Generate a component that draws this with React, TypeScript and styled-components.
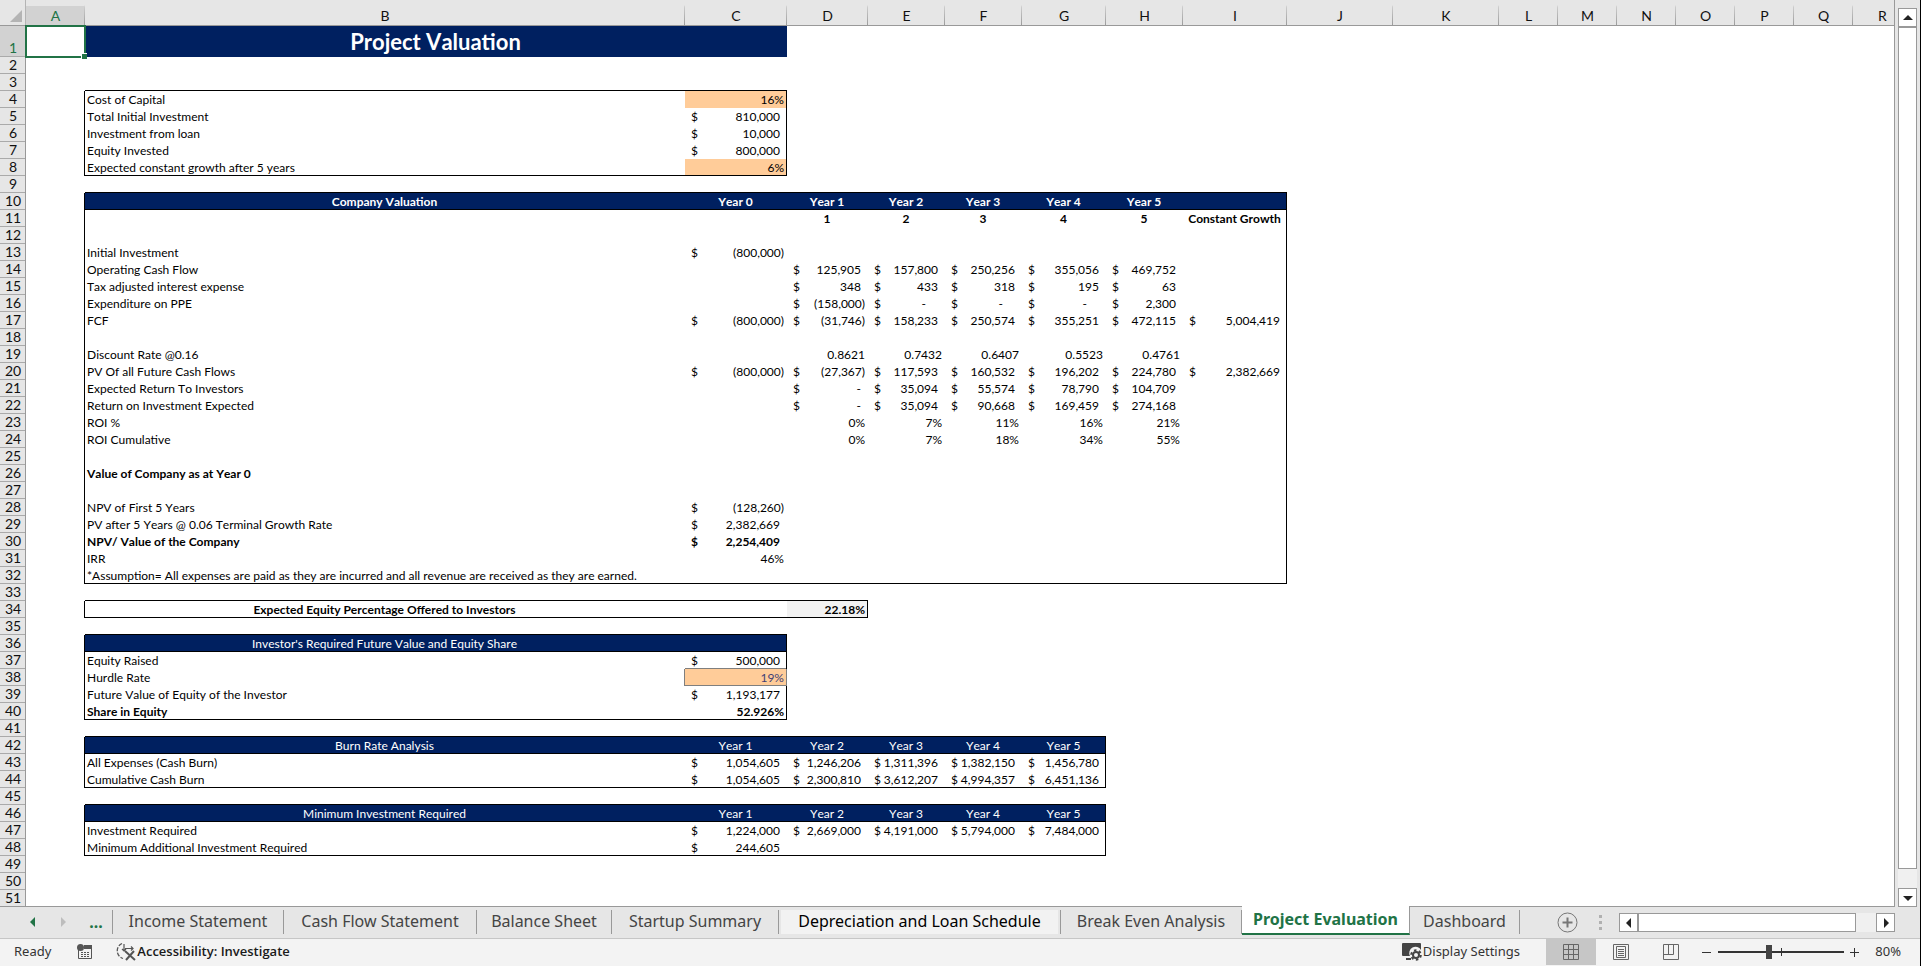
import React from "react";
import styled, { createGlobalStyle, css } from "styled-components";

const sheetFont = `Lato, "Liberation Sans", sans-serif`;
const uiFont = `"Noto Sans", "Open Sans", sans-serif`;
const navy = "#002060";
const green = "#217346";

const GlobalStyle = createGlobalStyle`
  *, *::before, *::after { box-sizing: border-box; }
  body { margin: 0; background: #e6e6e6; font-family: ${uiFont}; color: #000; }
  button { margin: 0; padding: 0; border: 0; background: none; font: inherit; color: inherit; cursor: pointer; }
  svg { display: block; flex: none; }
`;

const Window = styled.div`
  display: flex;
  flex-direction: column;
  height: 100vh;
  min-width: 960px;
  overflow: hidden;
  border-right: 1px solid #000;
`;

const Workspace = styled.div`
  display: flex;
  flex: 1;
  min-height: 0;
`;

const GridPane = styled.main`
  flex: 1;
  min-width: 0;
  overflow: hidden;
  background: linear-gradient(#e6e6e6 25px, #fff 25px);
  border-bottom: 1px solid #999;
  border-right: 1px solid #999;
`;

const Sheet = styled.table`
  table-layout: fixed;
  width: 0;
  border-collapse: separate;
  border-spacing: 0;
  font-family: ${sheetFont};
  font-size: 12px;
  line-height: 16px;
  font-kerning: none;
`;

const Col = styled.col<{ $w: number }>`
  width: ${(p) => p.$w}px;
`;

const ColHead = styled.th<{ $active?: boolean }>`
  height: 26px;
  padding: 7px 0 1px;
  font-size: 14px;
  line-height: 18px;
  font-weight: 400;
  color: ${(p) => (p.$active ? green : "#111")};
  background: linear-gradient(#999, #999) 0 100% / 100% 1px no-repeat,
    linear-gradient(#e6e6e6 5px, #ccc 7px, #999) 100% 0 / 1px 100% no-repeat,
    ${(p) => (p.$active ? "linear-gradient(#e6e6e6 6px, #d2d2d2 6px)" : "linear-gradient(#e6e6e6, #e6e6e6)")};
`;

const Corner = styled.th`
  height: 26px;
  padding: 10px 4px 4px 10px;
  background: #e6e6e6;
  box-shadow: inset -1px 0 #b4b4b4, inset 0 -1px #999;
`;

const RowHead = styled.th<{ $active?: boolean }>`
  height: ${(p) => (p.$active ? 31 : 17)}px;
  padding: 0 0 1px;
  font-size: 14px;
  line-height: 16px;
  font-weight: 400;
  vertical-align: bottom;
  color: ${(p) => (p.$active ? green : "#111")};
  background: ${(p) => (p.$active ? "#d2d2d2" : "#e6e6e6")};
  box-shadow: inset -1px 0 #999, inset 0 -1px #aaa;
`;

type Align = "left" | "center" | "right";
type CellStyle = {
  $fill?: string;
  $color?: string;
  $bold?: boolean;
  $title?: boolean;
  $align?: Align;
  $right?: string;
  $bottom?: string;
};

const Cell = styled.td<CellStyle>`
  padding: 1px 3px 0 2px;
  box-shadow: inset -1px 0 ${(p) => p.$right ?? "transparent"}, inset 0 -1px ${(p) => p.$bottom ?? "transparent"};
  background: ${(p) => p.$fill ?? "transparent"};
  color: ${(p) => p.$color ?? "#000"};
  font-weight: ${(p) => (p.$bold ? 700 : 400)};
  text-align: ${(p) => p.$align ?? "left"};
  white-space: nowrap;
  ${(p) =>
    p.$title &&
    css`
      font-size: 22px;
      line-height: 30px;
    `}
`;

const SelectedCell = styled(Cell)`
  position: relative;
`;

const Selection = styled.div`
  position: absolute;
  inset: -1px;
  border: 2px solid ${green};
  &::after {
    content: "";
    position: absolute;
    right: -3px;
    bottom: -3px;
    width: 6px;
    height: 6px;
    background: ${green};
    border-top: 1px solid #fff;
    border-left: 1px solid #fff;
  }
`;

const Money = styled.span<{ $negative?: boolean }>`
  display: flex;
  justify-content: space-between;
  padding-left: 4px;
  padding-right: ${(p) => (p.$negative ? 0 : 4)}px;
`;

const Dash = styled.span<{ $wide?: boolean }>`
  padding-right: ${(p) => (p.$wide ? 12 : 0)}px;
`;

const cols: [string, number][] = [
  ["A", 59], ["B", 600], ["C", 102], ["D", 81], ["E", 77], ["F", 77], ["G", 84], ["H", 77],
  ["I", 104], ["J", 106], ["K", 106], ["L", 59], ["M", 59], ["N", 59], ["O", 59], ["P", 59],
  ["Q", 59], ["R", 59],
];
const letters = cols.map((c) => c[0]);

type Row = { label?: string; values?: string[]; bold?: boolean };

/* Values start in column C. "$" marks the accounting format. */
const rows: Record<number, Row> = {
  4: { label: "Cost of Capital", values: ["16%"] },
  5: { label: "Total Initial Investment", values: ["$810,000"] },
  6: { label: "Investment from loan", values: ["$10,000"] },
  7: { label: "Equity Invested", values: ["$800,000"] },
  8: { label: "Expected constant growth after 5 years", values: ["6%"] },
  10: { label: "Company Valuation", values: ["Year 0", "Year 1", "Year 2", "Year 3", "Year 4", "Year 5"], bold: true },
  11: { values: ["", "1", "2", "3", "4", "5", "Constant Growth"], bold: true },
  13: { label: "Initial Investment", values: ["$(800,000)"] },
  14: { label: "Operating Cash Flow", values: ["", "$125,905", "$157,800", "$250,256", "$355,056", "$469,752"] },
  15: { label: "Tax adjusted interest expense", values: ["", "$348", "$433", "$318", "$195", "$63"] },
  16: { label: "Expenditure on PPE", values: ["", "$(158,000)", "$-", "$-", "$-", "$2,300"] },
  17: { label: "FCF", values: ["$(800,000)", "$(31,746)", "$158,233", "$250,574", "$355,251", "$472,115", "$5,004,419"] },
  19: { label: "Discount Rate @0.16", values: ["", "0.8621", "0.7432", "0.6407", "0.5523", "0.4761"] },
  20: { label: "PV Of all Future Cash Flows", values: ["$(800,000)", "$(27,367)", "$117,593", "$160,532", "$196,202", "$224,780", "$2,382,669"] },
  21: { label: "Expected Return To Investors", values: ["", "$-", "$35,094", "$55,574", "$78,790", "$104,709"] },
  22: { label: "Return on Investment Expected", values: ["", "$-", "$35,094", "$90,668", "$169,459", "$274,168"] },
  23: { label: "ROI %", values: ["", "0%", "7%", "11%", "16%", "21%"] },
  24: { label: "ROI Cumulative", values: ["", "0%", "7%", "18%", "34%", "55%"] },
  26: { label: "Value of Company as at Year 0", bold: true },
  28: { label: "NPV of First 5 Years", values: ["$(128,260)"] },
  29: { label: "PV after 5 Years @ 0.06 Terminal Growth Rate", values: ["$2,382,669"] },
  30: { label: "NPV/ Value of the Company", values: ["$2,254,409"], bold: true },
  31: { label: "IRR", values: ["46%"] },
  32: { label: "*Assumption= All expenses are paid as they are incurred and all revenue are received as they are earned." },
  34: { label: "Expected Equity Percentage Offered to Investors", values: ["", "22.18%"], bold: true },
  36: { label: "Investor's Required Future Value and Equity Share" },
  37: { label: "Equity Raised", values: ["$500,000"] },
  38: { label: "Hurdle Rate", values: ["19%"] },
  39: { label: "Future Value of Equity of the Investor", values: ["$1,193,177"] },
  40: { label: "Share in Equity", values: ["52.926%"], bold: true },
  42: { label: "Burn Rate Analysis", values: ["Year 1", "Year 2", "Year 3", "Year 4", "Year 5"] },
  43: { label: "All Expenses (Cash Burn)", values: ["$1,054,605", "$1,246,206", "$1,311,396", "$1,382,150", "$1,456,780"] },
  44: { label: "Cumulative Cash Burn", values: ["$1,054,605", "$2,300,810", "$3,612,207", "$4,994,357", "$6,451,136"] },
  46: { label: "Minimum Investment Required", values: ["Year 1", "Year 2", "Year 3", "Year 4", "Year 5"] },
  47: { label: "Investment Required", values: ["$1,224,000", "$2,669,000", "$4,191,000", "$5,794,000", "$7,484,000"] },
  48: { label: "Minimum Additional Investment Required", values: ["$244,605"] },
};

/* Outlined ranges: first row, last row, last column index. All start in column B. */
const boxes: { top: number; bottom: number; last: number; header?: boolean }[] = [
  { top: 4, bottom: 8, last: 2 },
  { top: 10, bottom: 32, last: 8, header: true },
  { top: 34, bottom: 34, last: 3 },
  { top: 36, bottom: 40, last: 2, header: true },
  { top: 42, bottom: 44, last: 6, header: true },
  { top: 46, bottom: 48, last: 6, header: true },
];

const inputFill = "#ffcc99";

function cellStyle(r: number, c: number): CellStyle {
  const s: CellStyle = { $bold: rows[r]?.bold };
  for (const b of boxes) {
    const inCols = c >= 1 && c <= b.last;
    const inRows = r >= b.top && r <= b.bottom;
    const isHeader = b.header && r === b.top;
    if (inCols && (r === b.top - 1 || r === b.bottom || isHeader)) s.$bottom = "#000";
    if (inRows && (c === 0 || c === b.last)) s.$right = "#000";
    if (inCols && isHeader) {
      s.$fill = navy;
      s.$color = "#fff";
    }
  }
  if (c === 2 && (r === 4 || r === 8 || r === 38)) s.$fill = inputFill;
  if (r === 34 && c === 3) s.$fill = "#f2f2f2";
  if (r === 38 && c === 2) {
    s.$color = "#3f3f76";
    s.$right = s.$bottom = "#7f7f7f";
  }
  if (r === 38 && c === 1) s.$right = "#7f7f7f";
  if (r === 37 && c === 2) s.$bottom = "#7f7f7f";
  if (c === 1 && (boxes.some((b) => b.header && b.top === r) || r === 34)) s.$align = "center";
  if (c > 1) {
    const v = rows[r]?.values?.[c - 2] ?? "";
    s.$align = r === 11 || v.startsWith("Year") ? "center" : "right";
  }
  return s;
}

function Value({ text, wide }: { text: string; wide: boolean }) {
  if (!text.startsWith("$")) return <>{text}</>;
  const amount = text.slice(1);
  return (
    <Money $negative={amount.startsWith("(")}>
      <span>$</span>
      {amount === "-" ? <Dash $wide={wide}>-</Dash> : <span>{amount}</span>}
    </Money>
  );
}

function SheetRow({ r }: { r: number }) {
  const row = rows[r];
  return (
    <tr>
      <RowHead scope="row">{r}</RowHead>
      {letters.map((l, c) => {
        const text = c === 1 ? row?.label : c > 1 ? row?.values?.[c - 2] : "";
        return (
          <Cell key={l} {...cellStyle(r, c)}>
            {text && c > 1 ? <Value text={text} wide={r === 16} /> : text}
          </Cell>
        );
      })}
    </tr>
  );
}

/* Vertical scroll bar */
const VScroll = styled.div`
  display: flex;
  flex-direction: column;
  width: 25px;
  padding: 8px 3px 0 3px;
  background: #e6e6e6;
`;

const ScrollButton = styled.button`
  display: flex;
  align-items: center;
  justify-content: center;
  flex: none;
  width: 19px;
  height: 19px;
  border: 1px solid #999;
  background: #fff;
`;

const VTrack = styled.div`
  display: flex;
  flex: 1;
  width: 19px;
  padding-bottom: 19px;
  background: #f0f0f0;
`;

const Thumb = styled.div`
  flex: 1;
  border: 1px solid #999;
  background: #fff;
`;

/* Sheet tabs */
const TabBar = styled.nav`
  display: flex;
  flex: none;
  height: 32px;
  background: #e6e6e6;
  border-bottom: 1px solid #c6c6c6;
`;

const TabNav = styled.div`
  display: flex;
  align-items: center;
  justify-content: space-between;
  flex: none;
  width: 113px;
  height: 24px;
  margin-top: 3px;
  padding: 0 7px 0 28px;
  border-right: 1px solid #999;
`;

const NavDots = styled.button`
  width: 18px;
  height: 22px;
  font-size: 16px;
  line-height: 18px;
  font-weight: 700;
  color: ${green};
`;

const Tab = styled.button<{ $w: number; $state?: "hover" | "active" }>`
  flex: none;
  width: ${(p) => p.$w}px;
  height: 24px;
  margin-top: 3px;
  padding-bottom: 3px;
  font-size: 16px;
  line-height: 20px;
  color: #444;
  white-space: nowrap;
  border-right: 1px solid #999;
  ${(p) =>
    p.$state === "hover" &&
    css`
      color: #000;
      background: linear-gradient(#f2f2f2, #f2f2f2) 50% 0 / calc(100% - 4px) 100% no-repeat;
    `}
  ${(p) =>
    p.$state === "active" &&
    css`
      height: 29px;
      margin-top: -1px;
      padding-bottom: 2px;
      color: ${green};
      font-weight: 700;
      background: #fff;
      border-bottom: 2px solid ${green};
    `}
`;

const AddTab = styled.button`
  display: flex;
  align-items: center;
  margin-left: 37px;
`;

const Grip = styled.div`
  display: flex;
  flex-direction: column;
  justify-content: center;
  gap: 3px;
  margin: 0 17px 0 auto;
  i {
    width: 3px;
    height: 3px;
    background: #b0b0b0;
  }
`;

const HScroll = styled.div`
  display: flex;
  flex: none;
  width: 276px;
  margin: 6px 25px 0 0;
`;

const HTrack = styled.div`
  display: flex;
  flex: 1;
  height: 19px;
  padding-right: 20px;
  background: #f0f0f0;
`;

/* Status bar */
const StatusBar = styled.footer`
  display: flex;
  align-items: stretch;
  flex: none;
  height: 27px;
  padding: 0 19px 1px 14px;
  background: #f3f3f3;
  color: #333;
  font-size: 13px;
  line-height: 24px;
  white-space: nowrap;
`;

const StatusItem = styled.button<{ $gap?: number; $strong?: boolean }>`
  display: flex;
  align-items: center;
  gap: 1px;
  margin-left: ${(p) => p.$gap ?? 0}px;
  padding-bottom: 2px;
  ${(p) =>
    p.$strong &&
    css`
      font-family: "Open Sans", sans-serif;
      font-weight: 600;
      color: #1a1a1a;
    `}
`;

const Spacer = styled.div`
  flex: 1;
`;

const ViewButton = styled.button<{ $on?: boolean }>`
  display: flex;
  align-items: center;
  justify-content: center;
  width: 50px;
  background: ${(p) => (p.$on ? "#c6c6c6" : "transparent")};
`;

const Views = styled.div`
  display: flex;
  margin-left: 26px;
`;

const ZoomButton = styled.button`
  display: flex;
  align-items: center;
  padding: 0 6px;
`;

const ZoomSlider = styled.input`
  appearance: none;
  width: 126px;
  height: 26px;
  margin: 0;
  background: linear-gradient(#333, #333) 50% 50% / 1px 8px no-repeat,
    linear-gradient(#333, #333) 0 50% / 100% 2px no-repeat;
  &::-webkit-slider-thumb {
    appearance: none;
    width: 6px;
    height: 14px;
    background: #444;
  }
`;

const ZoomLevel = styled.button`
  width: 26px;
  margin-left: 9px;
  padding-bottom: 2px;
  text-align: right;
`;

const Triangle = ({ dir, color = "#222" }: { dir: "up" | "down" | "left" | "right"; color?: string }) => {
  const d = {
    up: "M0 7L5 2L10 7Z",
    down: "M0 3L5 8L10 3Z",
    left: "M7 0L2 5L7 10Z",
    right: "M3 0L8 5L3 10Z",
  }[dir];
  return (
    <svg width="10" height="10" viewBox="0 0 10 10">
      <path d={d} fill={color} />
    </svg>
  );
};

const tabs: { name: string; w: number; state?: "hover" | "active" }[] = [
  { name: "Income Statement", w: 171 },
  { name: "Cash Flow Statement", w: 193 },
  { name: "Balance Sheet", w: 135 },
  { name: "Startup Summary", w: 167 },
  { name: "Depreciation and Loan Schedule", w: 282, state: "hover" },
  { name: "Break Even Analysis", w: 181 },
  { name: "Project Evaluation", w: 168, state: "active" },
  { name: "Dashboard", w: 110 },
];

export default function App() {
  return (
    <Window>
      <GlobalStyle />
      <Workspace>
        <GridPane>
          <Sheet>
            <colgroup>
              <Col $w={26} />
              {cols.map(([l, w]) => (
                <Col key={l} $w={w} />
              ))}
            </colgroup>
            <thead>
              <tr>
                <Corner aria-label="Select all">
                  <svg width="12" height="12" viewBox="0 0 12 12">
                    <path d="M12 0V12H0Z" fill="#b4b4b4" />
                  </svg>
                </Corner>
                {letters.map((l) => (
                  <ColHead key={l} scope="col" $active={l === "A"}>
                    {l}
                  </ColHead>
                ))}
              </tr>
            </thead>
            <tbody>
              <tr>
                <RowHead scope="row" $active>
                  1
                </RowHead>
                <SelectedCell>
                  <Selection />
                </SelectedCell>
                <Cell colSpan={2} $fill={navy} $color="#fff" $bold $title $align="center">
                  Project Valuation
                </Cell>
                {letters.slice(3).map((l) => (
                  <Cell key={l} />
                ))}
              </tr>
              {Array.from({ length: 50 }, (_, i) => (
                <SheetRow key={i} r={i + 2} />
              ))}
            </tbody>
          </Sheet>
        </GridPane>
        <VScroll>
          <ScrollButton aria-label="Scroll up">
            <Triangle dir="up" />
          </ScrollButton>
          <VTrack>
            <Thumb />
          </VTrack>
          <ScrollButton aria-label="Scroll down">
            <Triangle dir="down" />
          </ScrollButton>
        </VScroll>
      </Workspace>

      <TabBar>
        <TabNav>
          <button aria-label="Previous sheets">
            <Triangle dir="left" color={green} />
          </button>
          <button aria-label="Next sheets">
            <Triangle dir="right" color="#bdbdbd" />
          </button>
          <NavDots aria-label="More sheets">...</NavDots>
        </TabNav>
        {tabs.map((t) => (
          <Tab key={t.name} $w={t.w} $state={t.state}>
            {t.name}
          </Tab>
        ))}
        <AddTab aria-label="New sheet">
          <svg width="21" height="21" viewBox="0 0 21 21" fill="none" stroke="#777">
            <circle cx="10.5" cy="10.5" r="9.5" />
            <path d="M10.500 5.500V15.500M5.500 10.500H15.500" strokeWidth="2" />
          </svg>
        </AddTab>
        <Grip>
          <i />
          <i />
          <i />
        </Grip>
        <HScroll>
          <ScrollButton aria-label="Scroll left">
            <Triangle dir="left" />
          </ScrollButton>
          <HTrack>
            <Thumb />
          </HTrack>
          <ScrollButton aria-label="Scroll right">
            <Triangle dir="right" />
          </ScrollButton>
        </HScroll>
      </TabBar>

      <StatusBar>
        <StatusItem>Ready</StatusItem>
        <StatusItem $gap={26} aria-label="Record macro">
          <svg width="15" height="15" viewBox="0 0 15 15">
            <path d="M1.500 5.500V14.500H14.500V1.500H8" fill="none" stroke="#555" />
            <path d="M7 1H15V5H7Z" fill="#555" />
            <circle cx="3.500" cy="3.500" r="3.500" fill="#555" />
            <path d="M4 8.500H13M4 10.500H13M4 12.500H13" stroke="#555" strokeDasharray="2 1" />
          </svg>
        </StatusItem>
        <StatusItem $gap={24} $strong>
          <svg width="20" height="19" viewBox="0 0 20 19" fill="none" stroke="#555">
            <path d="M6 1.500A8 8 0 0 0 7 16.500" strokeDasharray="4 1.500" strokeWidth="1.300" />
            <path d="M8 2V9M6 7L8 9L10 7M9 6.500H17M15 4.500L17 6.500L15 8.500" strokeWidth="1.200" />
            <path d="M9 9L19 18M18 9L10 18" strokeWidth="2" />
          </svg>
          Accessibility: Investigate
        </StatusItem>
        <Spacer />
        <StatusItem>
          <svg width="20" height="19" viewBox="0 0 20 19">
            <path d="M1 1H18Q19 1 19 2V8A6 6 0 0 0 8 14H1Q0 14 0 13V2Q0 1 1 1Z" fill="#444" />
            <path d="M4 17H9" stroke="#444" strokeWidth="2" />
            <circle cx="14" cy="13" r="3" fill="none" stroke="#444" strokeWidth="2" />
            <circle cx="14" cy="13" r="4.800" fill="none" stroke="#444" strokeWidth="2" strokeDasharray="2.500 2.500" />
          </svg>
          Display Settings
        </StatusItem>
        <Views>
          <ViewButton $on aria-label="Normal">
            <svg width="16" height="16" viewBox="0 0 16 16" fill="none" stroke="#666">
              <path d="M.5.5H15.500V15.500H.5ZM.5 5.500H15.500M.5 10.500H15.500M5.500.5V15.500M10.500.5V15.500" />
            </svg>
          </ViewButton>
          <ViewButton aria-label="Page layout">
            <svg width="16" height="16" viewBox="0 0 16 16" fill="none" stroke="#666">
              <path d="M.5.5H15.500V15.500H.5ZM3.500 2.500H12.500V13.500H3.500ZM5 5.500H11M5 7.500H11M5 9.500H11M5 11.500H11" />
            </svg>
          </ViewButton>
          <ViewButton aria-label="Page break preview">
            <svg width="16" height="16" viewBox="0 0 16 16" fill="none" stroke="#666">
              <path d="M.5.5H15.500V15.500H.5ZM.5 10.500H10.500V.5M5.500.5V10.500" />
            </svg>
          </ViewButton>
        </Views>
        <ZoomButton aria-label="Zoom out">
          <svg width="10" height="10" viewBox="0 0 10 10" stroke="#333">
            <path d="M0 5.500H9" />
          </svg>
        </ZoomButton>
        <ZoomSlider type="range" min={0} max={100} defaultValue={40} aria-label="Zoom" />
        <ZoomButton aria-label="Zoom in">
          <svg width="10" height="10" viewBox="0 0 10 10" stroke="#333">
            <path d="M0 5.500H9M4.500 1V10" />
          </svg>
        </ZoomButton>
        <ZoomLevel>80%</ZoomLevel>
      </StatusBar>
    </Window>
  );
}
